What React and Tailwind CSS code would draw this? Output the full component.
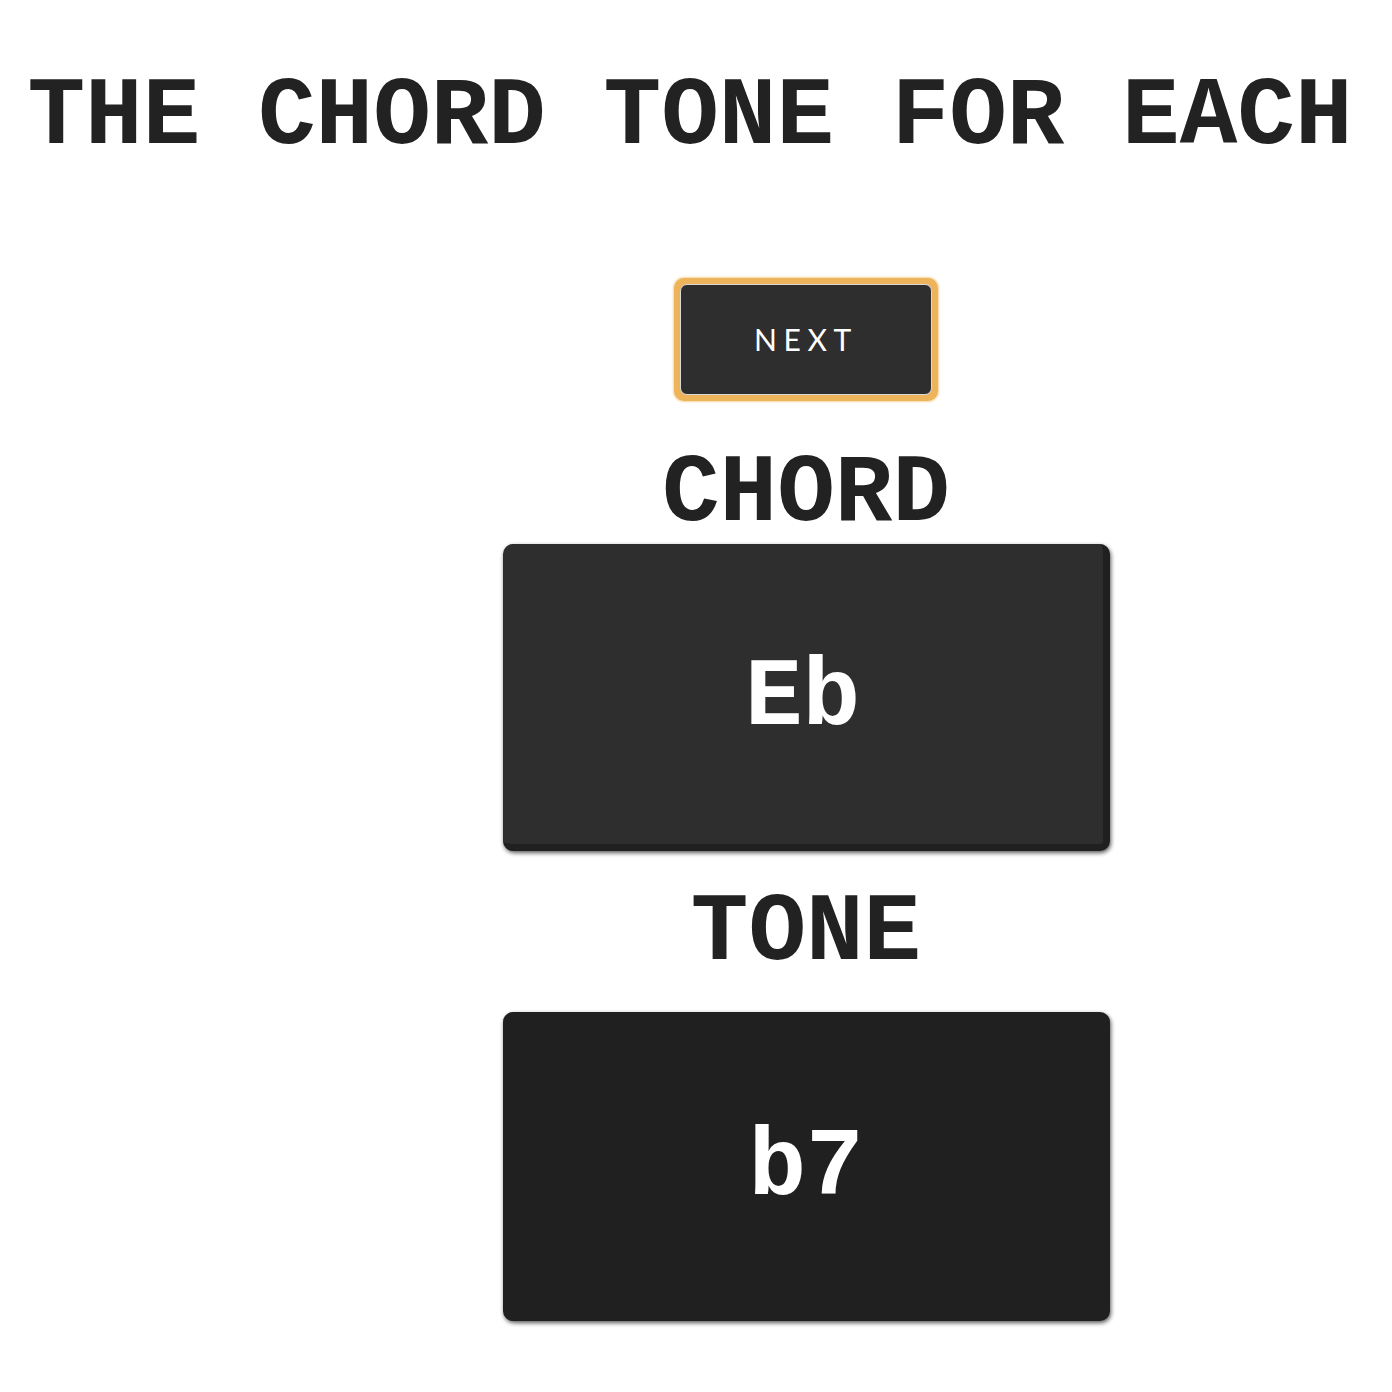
export default function App() {
  const mono = { fontFamily: '"Courier New", "Liberation Mono", monospace' };

  return (
    <div className="min-h-screen bg-white">
      <h1
        className="pt-[70px] pr-[12px] text-center text-[96px] leading-none font-bold text-[#222222] whitespace-nowrap"
        style={mono}
      >
        THE CHORD TONE FOR EACH
      </h1>

      <div className="flex">
        <div className="w-[220px] shrink-0" />
        <div className="flex flex-1 flex-col items-center pt-[112px]">
          <div className="rounded-[10px] bg-[#eeb45c] p-[6px] shadow-[0_0_2px_1px_#f6d6a0]">
            <button
              className="flex h-[111px] w-[252px] items-center justify-center rounded-[7px] border border-[#d9d9d9] bg-[#2e2e2e] text-[30px] tracking-[0.22em] text-white"
              style={{ fontFamily: 'Lato, "Open Sans", sans-serif' }}
            >
              NEXT
            </button>
          </div>

          <div
            className="mt-[46px] text-[96px] leading-none font-bold text-[#222222]"
            style={mono}
          >
            CHORD
          </div>
          <div className="mt-[1px] flex h-[307px] w-[607px] items-center justify-center rounded-[10px] border-r-[7px] border-b-[7px] border-[#202020] bg-[#2e2e2e] pt-[10px] shadow-[1px_2px_4px_rgba(0,0,0,0.65)]">
            <span className="text-[96px] leading-none font-bold text-white" style={mono}>
              Eb
            </span>
          </div>

          <div
            className="mt-[35px] text-[96px] leading-none font-bold text-[#222222]"
            style={mono}
          >
            TONE
          </div>
          <div className="mt-[30px] flex h-[309px] w-[607px] items-center justify-center rounded-[10px] bg-[#202020] pt-[4px] shadow-[1px_2px_4px_rgba(0,0,0,0.65)]">
            <span className="text-[96px] leading-none font-bold text-white" style={mono}>
              b7
            </span>
          </div>
        </div>
      </div>
    </div>
  );
}
